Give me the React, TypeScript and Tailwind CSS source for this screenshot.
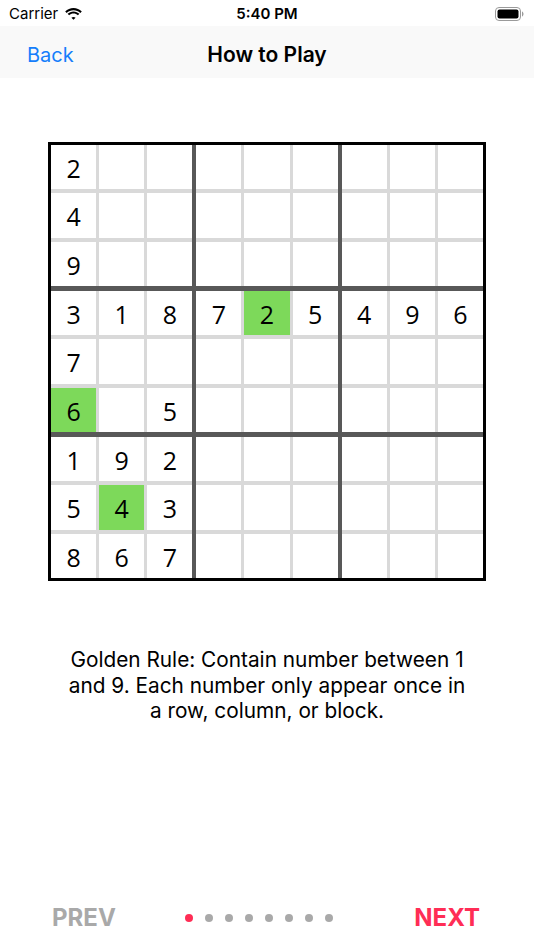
import { Fragment } from 'react'

type Cell = { v?: number; hl?: boolean }

// 9x9 board, 0 = empty
const rows: number[][] = [
    [2, 0, 0, 0, 0, 0, 0, 0, 0],
    [4, 0, 0, 0, 0, 0, 0, 0, 0],
    [9, 0, 0, 0, 0, 0, 0, 0, 0],
    [3, 1, 8, 7, 2, 5, 4, 9, 6],
    [7, 0, 0, 0, 0, 0, 0, 0, 0],
    [6, 0, 5, 0, 0, 0, 0, 0, 0],
    [1, 9, 2, 0, 0, 0, 0, 0, 0],
    [5, 4, 3, 0, 0, 0, 0, 0, 0],
    [8, 6, 7, 0, 0, 0, 0, 0, 0],
]

const highlighted = ['3-4', '5-0', '7-1']

const cellAt = (r: number, c: number): Cell => ({
    v: rows[r][c] || undefined,
    hl: highlighted.includes(`${r}-${c}`),
})

const Wifi = () => (
    <svg width="19" height="14" viewBox="0 0 19 14" fill="#000">
        <path d="M9.5 3.2c2.6 0 5 1 6.8 2.7l1.5-1.5C15.6 2.3 12.7 1 9.5 1S3.4 2.3 1.2 4.4l1.5 1.5C4.5 4.2 6.9 3.2 9.5 3.2z" />
        <path d="M9.5 6.6c1.7 0 3.2.6 4.4 1.7l1.5-1.5C13.8 5.3 11.8 4.4 9.5 4.4S5.2 5.3 3.6 6.8l1.5 1.5c1.2-1.1 2.7-1.7 4.4-1.7z" />
        <path d="M9.5 9.9c.8 0 1.5.3 2.1.8L9.5 12.8 7.4 10.7c.6-.5 1.3-.8 2.1-.8z" />
    </svg>
)

const Battery = () => (
    <svg width="30" height="14" viewBox="0 0 30 14">
        <rect x="0.5" y="0.5" width="25" height="13" rx="3.5" fill="none" stroke="#9a9a9a" />
        <rect x="2.5" y="2.5" width="21" height="9" rx="2" fill="#000" />
        <path d="M27 4.5v5c.9-.3 1.5-1.3 1.5-2.5S27.9 4.8 27 4.5z" fill="#9a9a9a" />
    </svg>
)

const Block = ({ br, bc }: { br: number; bc: number }) => (
    <div className="grid grid-cols-3 grid-rows-3 gap-x-[3px] gap-y-[4px] bg-[#d9d9d9]">
        {[0, 1, 2].map(i =>
            [0, 1, 2].map(j => {
                const cell = cellAt(br * 3 + i, bc * 3 + j)
                return (
                    <div
                        key={`${i}-${j}`}
                        className={`flex items-center justify-center pt-[3px] text-[25px] text-black ${cell.hl ? 'bg-[#7dd95a]' : 'bg-white'}`}
                        style={{ fontFamily: '"Open Sans", sans-serif' }}
                    >
                        {cell.v ?? ''}
                    </div>
                )
            })
        )}
    </div>
)

export default function App() {
    return (
        <div
            className="w-[534px] h-[950px] bg-white flex flex-col"
            style={{ fontFamily: 'Inter, "Liberation Sans", sans-serif' }}
        >
            {/* status bar */}
            <div className="h-[26px] flex items-center justify-between px-[9px] pt-[2px] text-[15px] text-black relative">
                <div className="flex items-center gap-[6px]">
                    <span>Carrier</span>
                    <Wifi />
                </div>
                <span className="absolute left-1/2 -translate-x-1/2 font-semibold">5:40 PM</span>
                <Battery />
            </div>

            {/* nav bar */}
            <div className="h-[52px] bg-[#f9f9f9] relative flex items-center px-[27px] pt-[6px]">
                <span className="text-[20px] text-[#157efb]">Back</span>
                <span className="absolute left-1/2 -translate-x-1/2 text-[21px] font-semibold text-black">How to Play</span>
            </div>

            {/* board */}
            <div className="flex justify-center pt-[64px]">
                <div className="w-[438px] h-[439px] border-[3px] border-black bg-[#585858] grid grid-cols-3 grid-rows-3 gap-x-[4px] gap-y-[5px]">
                    {[0, 1, 2].map(br => (
                        <Fragment key={br}>
                            {[0, 1, 2].map(bc => (
                                <Block key={bc} br={br} bc={bc} />
                            ))}
                        </Fragment>
                    ))}
                </div>
            </div>

            <p className="mt-[66px] px-[67px] text-center text-[20.8px] leading-[25.5px] text-black">
                Golden Rule: Contain number between 1 and 9. Each number only appear once in a row, column, or block.
            </p>

            {/* pager */}
            <div className="mt-auto h-[64px] flex items-center pl-[52px] pr-[54px]">
                <div className="w-[133px]">
                    <span className="text-[24px] font-bold text-[#a9a9a9]">PREV</span>
                </div>
                <div className="flex items-center gap-[12px]">
                    {[0, 1, 2, 3, 4, 5, 6, 7].map(i => (
                        <span
                            key={i}
                            className={`w-[8px] h-[8px] rounded-full ${i === 0 ? 'bg-[#ff2d55]' : 'bg-[#a9a9a9]'}`}
                        />
                    ))}
                </div>
                <div className="flex-1 flex justify-end">
                    <span className="text-[24px] font-bold text-[#ff2d55]">NEXT</span>
                </div>
            </div>
        </div>
    )
}
